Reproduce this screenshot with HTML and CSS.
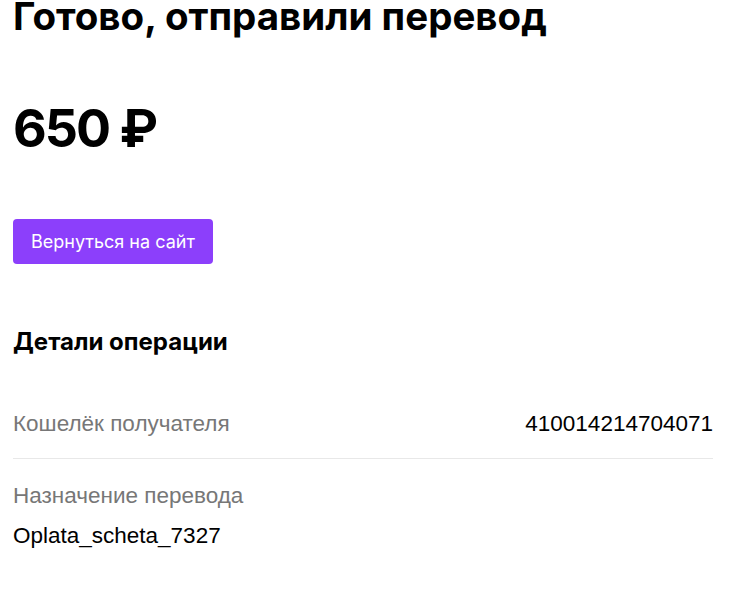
FILE: index.html
```html
<!DOCTYPE html>
<html lang="ru">
<head>
  <meta charset="UTF-8" />
  <meta name="viewport" content="width=device-width, initial-scale=1.0"/>
  <title>Перевод отправлен</title>
  <link rel="stylesheet" href="styles.css">
</head>
<body>
  <div class="page">
    <h1 class="title">Готово, отправили перевод</h1>

    <div class="amount">650 ₽</div>

    <a class="btn" href="#">Вернуться на сайт</a>

    <h2 class="details-title">Детали операции</h2>

    <div class="row">
      <span class="label">Кошелёк получателя</span>
      <span class="value">410014214704071</span>
    </div>

    <div class="row row-stack">
      <span class="label">Назначение перевода</span>
      <span class="value">Oplata_scheta_7327</span>
    </div>
  </div>
</body>
</html>
```

FILE: styles.css
```css
body { margin: 0; font-family: "Inter", "Liberation Sans", sans-serif; background: #fff; color: #000; }
.page { width: 700px; padding: 0 0 0 13px; }
.title { margin: -7px 0 0; font-size: 38.5px; line-height: 46px; font-weight: 700; }
.amount { margin-top: 58px; font-size: 52px; line-height: 64px; font-weight: 700; letter-spacing: -2px; }
.btn { display: inline-block; margin-top: 58px; padding: 0 18px; height: 45px; line-height: 45px; background: #8c3ffb; color: #fff; font-size: 18px; border-radius: 4px; text-decoration: none; }
.details-title { margin: 63px 0 0; font-size: 24px; line-height: 30px; font-weight: 700; }
.row { display: flex; justify-content: space-between; align-items: baseline; padding: 53px 0 20px; border-bottom: 1px solid #e8e8e8; font-family: "Liberation Sans", sans-serif; font-size: 22.5px; line-height: 28px; }
.row-stack { flex-direction: column; border-bottom: none; padding-top: 23px; gap: 12px; }
.label { color: #777; }
.value { color: #000; }
```
